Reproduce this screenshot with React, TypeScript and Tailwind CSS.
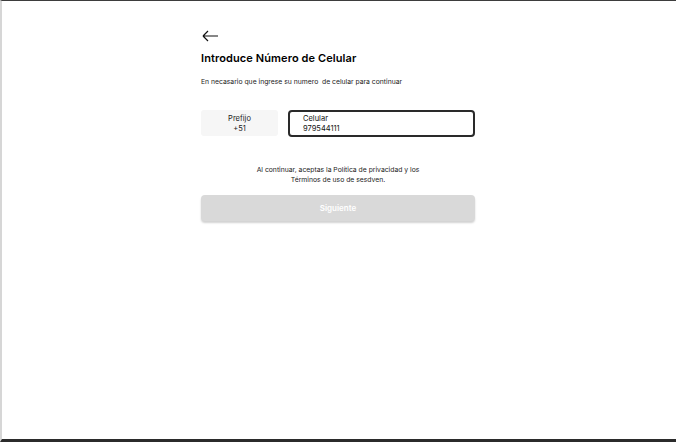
import React from "react";

const App: React.FC = () => {
    return (
        <div
            className="w-[676px] h-[442px] bg-white border-t border-t-[#3d3d3d] border-b-[3px] border-b-[#2b2b2b] border-l-2 border-l-[#d6d6d6] overflow-hidden"
            style={{ fontFamily: "Inter, 'Noto Sans', sans-serif" }}
        >
            <div className="ml-[199px] w-[274px] pt-[29px] text-black">
                <svg width="17" height="12" viewBox="0 0 17 12" fill="none" className="ml-[1px]">
                    <path d="M16 6H1M1 6L6 1M1 6L6 11" stroke="#111" strokeWidth="1.2" />
                </svg>
                <h1 className="mt-[9px] text-[11px] font-semibold leading-[14px] tracking-[0.1px]">
                    Introduce Número de Celular
                </h1>
                <p className="mt-[12px] text-[6.8px] leading-[10px] text-[#222]">
                    En necasario que ingrese su numero&nbsp; de celular para continuar
                </p>
                <div className="mt-[23px] flex items-stretch gap-[10px]">
                    <div className="w-[77px] h-[26px] rounded-[3px] bg-[#f6f6f6] pt-[1px] flex flex-col items-center justify-center text-[7.5px] leading-[10px] text-[#222]">
                        <span>Prefijo</span>
                        <span>+51</span>
                    </div>
                    <div className="flex-1 h-[27px] rounded-[4px] border-2 border-[#2a2a2a] pl-[13px] flex flex-col justify-center text-[7.5px] leading-[10px] text-[#111]">
                        <span>Celular</span>
                        <span>979544111</span>
                    </div>
                </div>
                <p className="mt-[28px] text-center text-[6.8px] leading-[10px] text-[#222]">
                    Al continuar, aceptas la Política de privacidad y los
                    <br />
                    Términos de uso de sesdven.
                </p>
                <button className="mt-[10px] w-[274px] h-[26px] rounded-[4px] bg-[#d9d9d9] shadow-[0_2px_2px_rgba(0,0,0,0.18)] text-white text-[8px] font-semibold">
                    Siguiente
                </button>
            </div>
        </div>
    );
};

export default App;
